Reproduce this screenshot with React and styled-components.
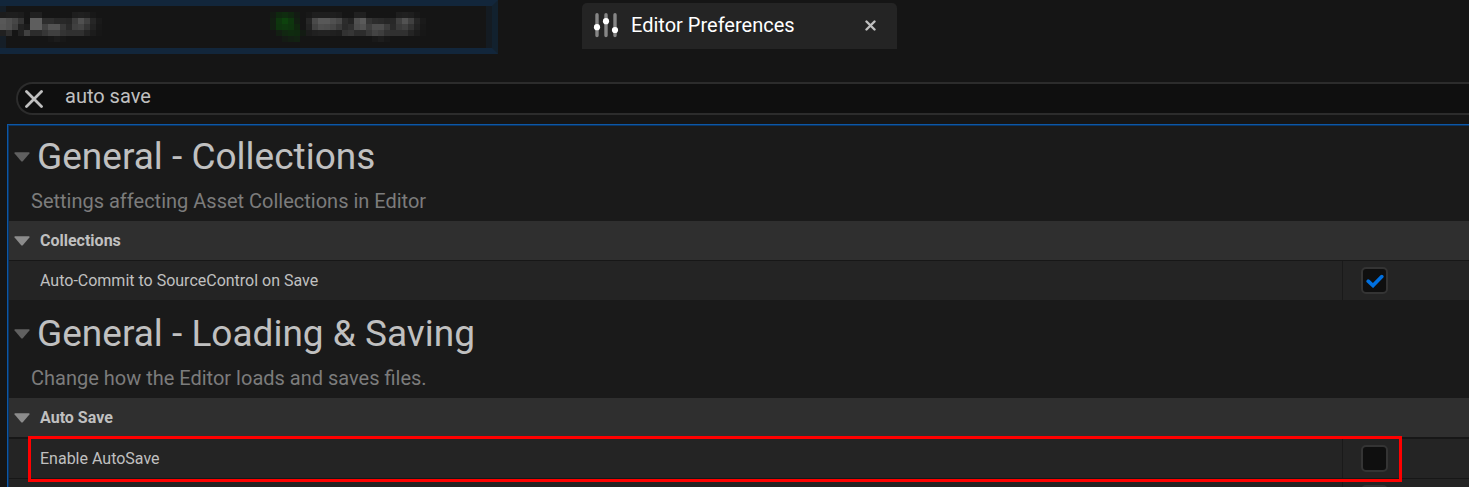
import React, { useState } from 'react';
import styled, { createGlobalStyle } from 'styled-components';

const GlobalStyle = createGlobalStyle`
  * { box-sizing: border-box; }
  body {
    margin: 0;
    background: #151515;
    color: #c0c0c0;
    font-family: Roboto, "Liberation Sans", sans-serif;
  }
  button, input { font: inherit; color: inherit; }
  button { border: 0; padding: 0; background: none; cursor: pointer; }
`;

const Shell = styled.div`
  display: flex;
  flex-direction: column;
  height: 100vh;
  overflow: hidden;
`;

const TabStrip = styled.header`
  display: flex;
  align-items: flex-start;
  gap: 84px;
`;

const HiddenTabs = styled.div`
  display: flex;
  justify-content: space-between;
  flex: 0 0 498px;
  height: 54px;
  padding-right: 66px;
  border: 6px solid #12263b;
  border-right-color: #12212e;
  border-left: 0;
  box-shadow: inset 6px 0 #151e27, inset -6px 0 #141b22;
`;

const Tab = styled.div`
  display: flex;
  align-items: center;
  width: 315px;
  height: 46px;
  margin-top: 3px;
  padding: 0 18px 2px 11px;
  border-radius: 5px 5px 0 0;
  background: #242424;
  color: #ffffff;
  font-size: 20px;
`;

const TabTitle = styled.span`
  flex: 1;
  padding-left: 12px;
`;

const IconButton = styled.button`
  display: grid;
  place-items: center;
  width: ${(p) => p.$size}px;
  height: ${(p) => p.$size}px;
`;

const SearchBar = styled.div`
  display: flex;
  align-items: center;
  height: 33px;
  margin: 28px 0 9px 16px;
  padding-left: 6px;
  border: 2px solid #2c2c2c;
  border-right: 0;
  border-radius: 17px 0 0 17px;
  background: #0f0f0f;
`;

const SearchInput = styled.input`
  flex: 1;
  min-width: 0;
  padding: 0 0 5px 21px;
  border: 0;
  outline: 0;
  background: none;
  font-size: 20px;
  line-height: 24px;
`;

const Panel = styled.main`
  flex: 1;
  min-height: 0;
  margin-left: 7px;
  border: 1px solid #0d57a6;
  border-width: 1px 0 0 1px;
  overflow: hidden;
`;

const PanelBody = styled.div`
  display: flex;
  flex-direction: column;
  gap: 3px;
  border: 1px solid #0a3461;
  border-width: 1px 0 0 1px;
  background: #1a1a1a;
`;

const SectionHead = styled.div`
  height: 95px;
  padding-left: 5px;
`;

const SectionTitle = styled.h1`
  display: flex;
  align-items: center;
  gap: 7px;
  height: 62px;
  margin: 0;
  font-size: 37px;
  font-weight: 400;
  line-height: 44px;
`;

const Description = styled.p`
  margin: 0;
  padding-left: 17px;
  color: #7c7c7c;
  font-size: 20px;
  line-height: 26px;
`;

const Category = styled.h2`
  display: flex;
  align-items: center;
  gap: 10px;
  height: 39px;
  margin: 0;
  padding-left: 5px;
  background: #2f2f2f;
  font-size: 16px;
  font-weight: 700;
`;

const Row = styled.div`
  position: relative;
  display: grid;
  grid-template-columns: 1fr 127px;
  grid-template-rows: 39px;
  border-top: ${(p) => p.$divider}px solid #171717;
  background: #242424;
`;

const RowLabel = styled.label`
  display: flex;
  align-items: center;
  padding-left: 31px;
  font-size: 16px;
`;

const RowValue = styled.div`
  display: flex;
  align-items: center;
  padding-left: 18px;
  border-left: 1px solid #1a1a1a;
`;

const CheckWrap = styled.span`
  display: grid;
  place-items: center;
  & > * { grid-area: 1 / 1; }
  svg { pointer-events: none; }
`;

const Checkbox = styled.input`
  appearance: none;
  width: 27px;
  height: 27px;
  margin: 0;
  border: 2px solid #343434;
  border-radius: 5px;
  background: #0f0f0f;
`;

const Highlight = styled.div`
  position: absolute;
  inset: -3px 67px -4px 19px;
  z-index: 1;
  border: 3px solid #ff0000;
  pointer-events: none;
`;

const CELL = 6;

/* Each row is a list of hex bytes for grey cells; ".." leaves a cell empty. */
const LEFT_CELLS = [
  '1c 1e 1e 1c .. 20 20 .. .. .. .. .. 1e 20 1e 18 ..',
  '58 50 46 34 .. 5e 5e 2e 2e 28 28 26 3c 50 40 26 1a',
  '56 50 40 22 1c 5e 5e 42 54 54 38 2a 40 44 34 22 18',
  '20 2e .. 22 40 2c 2c 36 40 40 34 30 30 30 24 1c 17',
  '.. .. .. .. .. .. .. .. 18 1c 18 .. .. .. .. .. ..',
];
const RIGHT_CELLS = [
  '18 1e 1e 1e 1e 1c .. .. 20 20 .. .. .. .. .. 1e 20 1e 18 ..',
  '26 4a 58 58 50 48 2c 24 50 5a 34 2c 2a 26 28 40 52 40 26 1a',
  '22 42 4e 4c 46 3a 2a 30 4c 52 3e 4c 4c 3c 2a 3a 40 32 22 18',
  '1c 20 22 22 20 1e 32 36 2c 2c 38 44 3e 32 30 30 30 24 1c 17',
  '.. .. .. .. .. .. .. .. .. .. .. 19 1d 18 .. .. .. .. .. ..',
];
const GREEN_CELLS = [
  ['', '131b13', '0f280f', '0f2c0f', '102610', '131b13', ''],
  ['', '121f12', '0e360e', '0d420d', '0e360e', '121f12', ''],
  ['', '121f12', '0e340e', '0e370e', '0e340e', '10260f', ''],
  ['', '', '131f13', '112711', '0f2b0f', '0f290f', '131b13'],
  ['', '', '', '141b14', '131f13', '122212', ''],
];

const toColors = (rows) =>
  rows.map((r) => r.split(' ').map((c) => (c === '..' ? '' : c + c + c)));

function Mosaic({ rows }) {
  const width = rows[0].length * CELL;
  return (
    <svg width={width} height="42" shapeRendering="crispEdges" aria-hidden="true">
      {rows.flatMap((row, y) =>
        row.map((c, x) =>
          c ? (
            <rect
              key={`${x}-${y}`}
              x={x * CELL}
              y={(y + 1) * CELL}
              width={CELL}
              height={CELL}
              fill={`#${c}`}
            />
          ) : null
        )
      )}
    </svg>
  );
}

const rightCells = toColors(RIGHT_CELLS).map((row, i) => [...GREEN_CELLS[i], ...row]);

function SlidersIcon() {
  return (
    <svg width="26" height="26" viewBox="0 0 26 26" aria-hidden="true">
      <path d="M4 2.7v20.8M13 2.7v20.8M22 2.7v20.8" stroke="#868686" strokeWidth="3.4" strokeLinecap="round" />
      <g fill="#fff">
        <circle cx="4" cy="15.2" r="3.1" />
        <circle cx="13" cy="9.2" r="3.1" />
        <circle cx="22" cy="18" r="3.1" />
      </g>
    </svg>
  );
}

function Cross({ size, weight }) {
  return (
    <svg width={size} height={size} viewBox={`0 0 ${size} ${size}`} aria-hidden="true">
      <path
        d={`M1.5 1.5L${size - 1.5} ${size - 1.5}M${size - 1.5} 1.5L1.5 ${size - 1.5}`}
        stroke="#c0c0c0"
        strokeWidth={weight}
      strokeLinecap="round"
      />
    </svg>
  );
}

function Arrow({ color }) {
  return (
    <svg width="16" height="10" viewBox="0 0 16 10" aria-hidden="true">
      <path d="M1 .3h14q1 .2.4 1.1L8.8 9.2q-.8.8-1.6 0L.6 1.4Q0 .5 1 .3z" fill={color} />
    </svg>
  );
}

function Setting({ id, label, initial = false, divider = 1, highlighted = false }) {
  const [on, setOn] = useState(initial);
  return (
    <Row $divider={divider}>
      <RowLabel htmlFor={id}>{label}</RowLabel>
      <RowValue>
        <CheckWrap>
          <Checkbox id={id} type="checkbox" checked={on} onChange={() => setOn(!on)} />
          {on && (
            <svg width="18" height="14" viewBox="0 0 18 14" aria-hidden="true">
              <path
                d="M2.2 7.2L7 11.6L15.8 2.6"
                fill="none"
                stroke="#0070e0"
                strokeWidth="3.6"
                strokeLinecap="round"
              />
            </svg>
          )}
        </CheckWrap>
      </RowValue>
      {highlighted && <Highlight />}
    </Row>
  );
}

function Section({ title, description, category, children }) {
  return (
    <section>
      <SectionHead>
        <SectionTitle>
          <IconButton type="button" $size={16} aria-label={`Collapse ${title}`}>
            <Arrow color="#606060" />
          </IconButton>
          {title}
        </SectionTitle>
        <Description>{description}</Description>
      </SectionHead>
      <Category>
        <IconButton type="button" $size={16} aria-label={`Collapse ${category}`}>
          <Arrow color="#8c8c8c" />
        </IconButton>
        {category}
      </Category>
      {children}
    </section>
  );
}

export default function App() {
  const [query, setQuery] = useState('auto save');
  return (
    <Shell>
      <GlobalStyle />
      <TabStrip>
        <HiddenTabs>
          <Mosaic rows={toColors(LEFT_CELLS)} />
          <Mosaic rows={rightCells} />
        </HiddenTabs>
        <Tab>
          <SlidersIcon />
          <TabTitle>Editor Preferences</TabTitle>
          <IconButton type="button" $size={18} aria-label="Close tab">
            <Cross size={11} weight={2.4} />
          </IconButton>
        </Tab>
      </TabStrip>
      <SearchBar>
        <IconButton type="button" $size={20} aria-label="Clear search" onClick={() => setQuery('')}>
          <Cross size={18} weight={2.8} />
        </IconButton>
        <SearchInput
          type="text"
          aria-label="Search settings"
          value={query}
          onChange={(e) => setQuery(e.target.value)}
        />
      </SearchBar>
      <Panel>
        <PanelBody>
          <Section
            title="General - Collections"
            description="Settings affecting Asset Collections in Editor"
            category="Collections"
          >
            <Setting id="auto-commit" label="Auto-Commit to SourceControl on Save" initial />
          </Section>
          <Section
            title="General - Loading &amp; Saving"
            description="Change how the Editor loads and saves files."
            category="Auto Save"
          >
            <Setting id="enable-autosave" label="Enable AutoSave" divider={2} highlighted />
            <Setting id="next-setting" label="" />
          </Section>
        </PanelBody>
      </Panel>
    </Shell>
  );
}
